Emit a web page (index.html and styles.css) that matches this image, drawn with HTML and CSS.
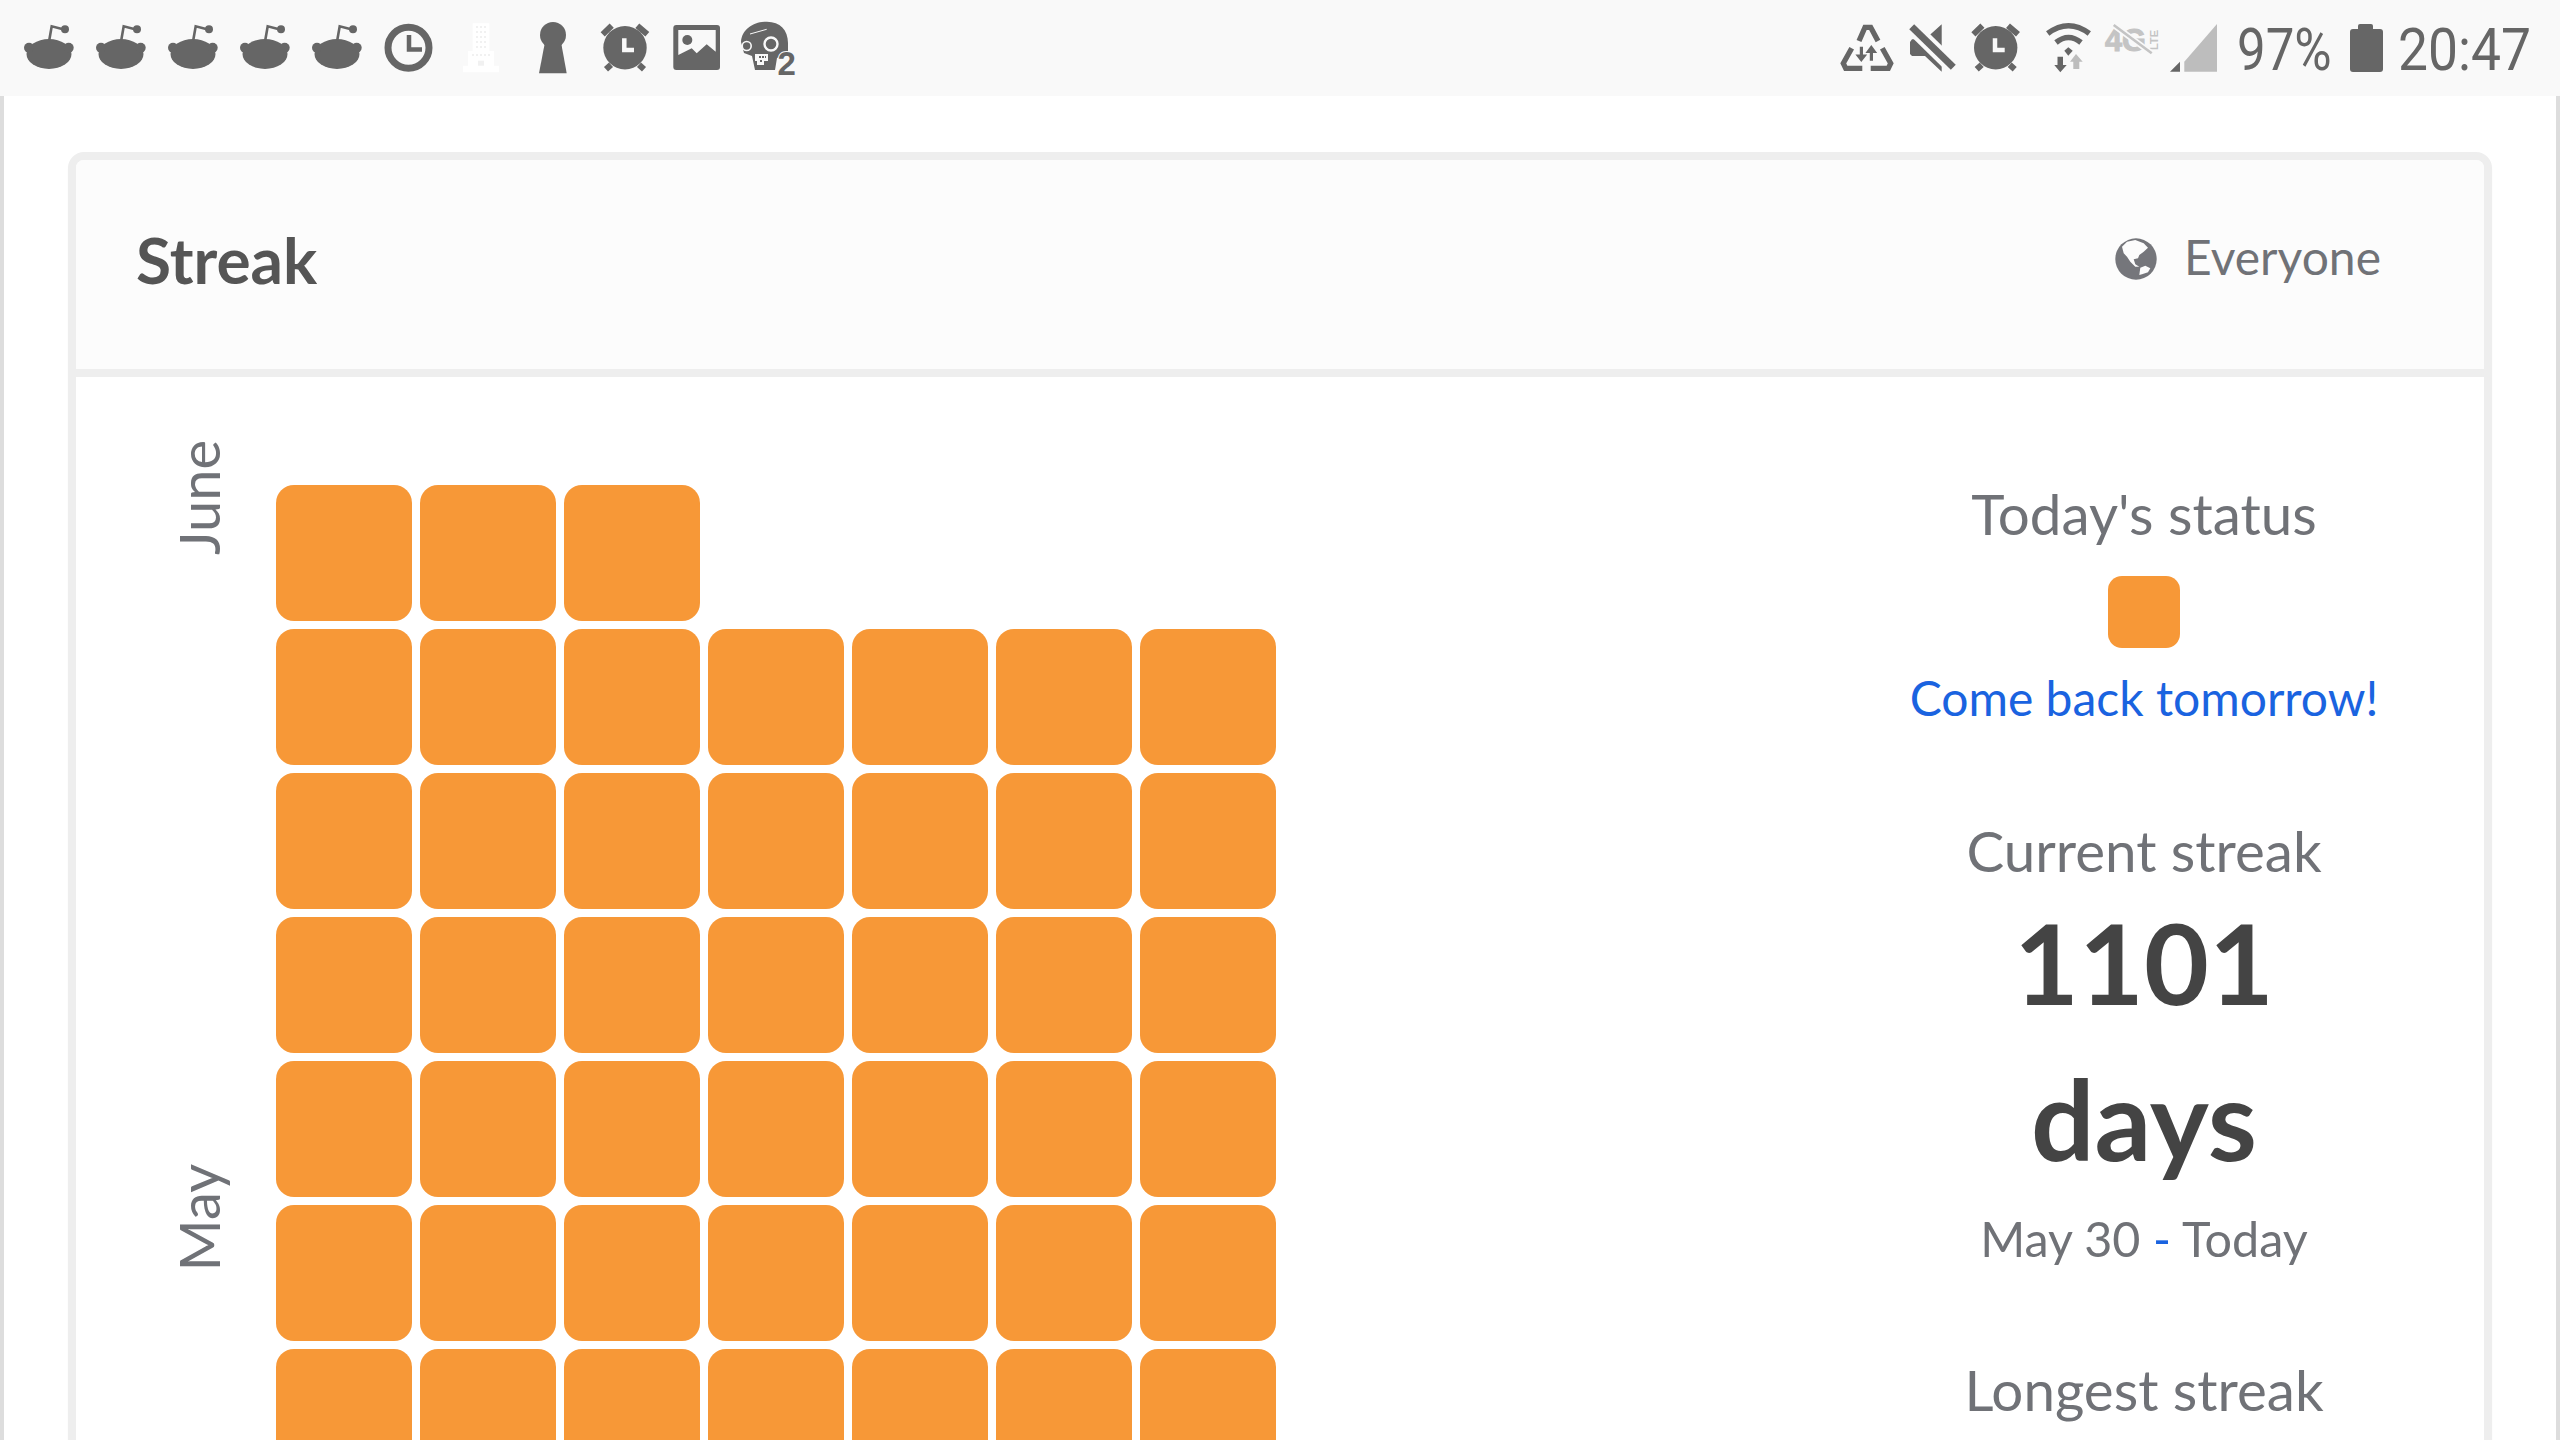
FILE: index.html
```html
<!DOCTYPE html>
<html lang="en">
<head>
    <meta charset="UTF-8">
    <title>Streak</title>
    <link rel="stylesheet" href="styles.css">
</head>
<body>
    <svg class="defs" width="0" height="0">
        <symbol id="reddit" viewBox="0 0 72 72">
            <ellipse cx="36" cy="42" rx="22.5" ry="15"/>
            <circle cx="16" cy="35.7" r="5"/>
            <circle cx="55.7" cy="35.7" r="5"/>
            <path d="M36.3 28 38.7 14.3 51 17.5" fill="none" stroke="#666" stroke-width="2.6"/>
            <circle cx="52" cy="17.3" r="4"/>
        </symbol>
        <symbol id="alarm" viewBox="0 0 72 72">
            <circle cx="36" cy="35.7" r="21.7"/>
            <path d="M13.7 22.3 22.7 13.7M58.3 22.3 48.3 13.7M17 57.3 22 52.7M55 57.3 50 52.7" fill="none" stroke="#666" stroke-width="6"/>
            <path d="M35.3 26.3V38H45" fill="none" stroke="#f9f9f9" stroke-width="4.5"/>
        </symbol>
    </svg>

    <!-- Android status bar -->
    <div class="statusbar">
        <div class="notify-icons">
            <svg class="sb-icon"><use href="#reddit"/></svg>
            <svg class="sb-icon"><use href="#reddit"/></svg>
            <svg class="sb-icon"><use href="#reddit"/></svg>
            <svg class="sb-icon"><use href="#reddit"/></svg>
            <svg class="sb-icon"><use href="#reddit"/></svg>
            <svg class="sb-icon" viewBox="0 0 72 72">
                <circle cx="35.5" cy="35.7" r="20.5" fill="none" stroke="#666" stroke-width="7"/>
                <path d="M36 23V37.5H49" fill="none" stroke="#666" stroke-width="4.5"/>
            </svg>
            <svg class="sb-icon" viewBox="0 0 72 72">
                <path d="M27.7 11.3H44.3V39H49V53.7H54V60.3H18V53.7H23V39H27.7Z" fill="#fff"/>
                <path d="M31 15H41M31 20H41M31 25H41M31 30H41M31 35H41M27 43H45" fill="none" stroke="#f1f1f1" stroke-width="2" stroke-dasharray="2 2"/>
                <rect x="33" y="48.7" width="6" height="5" fill="#f1f1f1"/>
            </svg>
            <svg class="sb-icon" viewBox="0 0 72 72">
                <circle cx="36" cy="23" r="13"/>
                <path d="M28 30H44L49.7 61.3H22Z"/>
            </svg>
            <svg class="sb-icon"><use href="#alarm"/></svg>
            <svg class="sb-icon" viewBox="0 0 72 72">
                <rect x="12.3" y="13" width="46.7" height="45" rx="3"/>
                <path d="M17.3 18H54.7V39.7L45.7 32.3 35.7 41.3 30.7 36.3 17.3 43Z" fill="#f9f9f9"/>
                <circle cx="26.3" cy="28" r="5"/>
            </svg>
            <svg class="sb-icon zombie" viewBox="0 0 72 72">
                <path d="M8 30C9 16 22 9.7 34 9.7 47 9.7 55 18 55 31V42L44 46 42 58H22L19 44 11 41Z"/>
                <circle cx="13.7" cy="34" r="4.5" fill="none" stroke="#f9f9f9" stroke-width="1.6"/>
                <circle cx="38" cy="32" r="6.5" fill="none" stroke="#f9f9f9" stroke-width="2.4"/>
                <path d="M17 22 33.7 17.3" fill="none" stroke="#f9f9f9" stroke-width="1"/>
                <path d="M22 42H35V49H31V53H24V49H22Z" fill="#f9f9f9"/>
                <path d="M26 45H33M27 49H30" fill="none" stroke="#666" stroke-width="2" stroke-dasharray="2 1"/>
                <text x="44.5" y="63" class="zombie-two">2</text>
            </svg>
        </div>
        <div class="system-icons">
            <svg class="sb-icon narrow recycle" viewBox="0 0 64 72">
                <path d="M25 29 31 15.3H36.7L44 29M17.7 36.3 9.3 51.3 11.7 56.3H28.3M36.7 56.3H54.3L56.7 51.3 48.3 36.3" fill="none" stroke="#666" stroke-width="5.3"/>
                <path d="M25.8 34.7H29V42.5H33.2L27.3 50 21.4 42.5H25.8ZM35.8 48.7H39V41H43.2L37.3 33 31.4 41H35.8Z"/>
            </svg>
            <svg class="sb-icon narrow" viewBox="0 0 64 72">
                <path d="M11 30 13 27.3H26L42.7 12.3V59.7L26 44H13L11 42Z"/>
                <path d="M12.7 14.7 54.3 55.3" fill="none" stroke="#f9f9f9" stroke-width="15"/>
                <path d="M12.7 14.7 54.3 55.3" fill="none" stroke="#666" stroke-width="7"/>
            </svg>
            <svg class="sb-icon narrow alarm-right" viewBox="3.3 0 64 72"><use href="#alarm" width="72" height="72"/></svg>
            <svg class="sb-icon" viewBox="0 0 72 72">
                <path d="M15.7 21.5Q36.5 6 57.3 21.5M24 30.5Q36.5 20.5 49 30.5" fill="none" stroke="#666" stroke-width="5.5"/>
                <path d="M32.3 38.7 36.3 35.3 40.7 38.7 36.3 43.7Z"/>
                <path d="M25.5 44.7H31V53H34.7L28.3 60.3 22.3 53H25.5Z"/>
                <path d="M41.3 57H47.3V49.7H50.7L44 42 38 49.7H41.3Z" fill="#bdbdbd"/>
            </svg>
            <svg class="sb-icon fourg" viewBox="0 0 55 72">
                <text x="1" y="38.7" class="fourg-main" textLength="41" lengthAdjust="spacingAndGlyphs">4G</text>
                <text transform="translate(54.3 38) rotate(-90)" class="fourg-lte" textLength="20" lengthAdjust="spacingAndGlyphs">LTE</text>
                <path d="M9.7 13 47.7 41.3" fill="none" stroke="#f9f9f9" stroke-width="6"/>
                <path d="M9.7 13 47.7 41.3" fill="none" stroke="#c4c4c4" stroke-width="2.6"/>
            </svg>
            <svg class="sb-icon narrow" viewBox="0 0 64 72">
                <path d="M25.3 49.7 58 12V59.7H25.3Z" fill="#bdbdbd"/>
                <path d="M11 59.7 21 49.7V59.7Z"/>
            </svg>
            <span class="sb-text battery-text">97%</span>
            <div class="battery"></div>
            <span class="sb-text clock-text">20:47</span>
        </div>
    </div>

    <div class="page">
        <div class="card">
            <div class="card-header">
                <h1 class="card-title">Streak</h1>
                <div class="visibility">
                    <svg class="globe" viewBox="0 0 42 42">
                        <circle cx="21" cy="21" r="20.7" fill="#75767b"/>
                        <path d="M7 8.7 12 3.7 20.3 2 28.7 5.3 33 9.7 28.7 13.7 24.3 17 23 20.3 18.7 21.3 20.3 26.3 24.3 28.7H20.3L15.3 23.7 12 18.7 8.7 15.3Z" fill="#fcfcfc"/>
                        <path d="M25.3 29.7 30.3 27.7 35.3 30.3 33 34.3 27 36.3 24.3 37Z" fill="#fcfcfc"/>
                    </svg>
                    <span>Everyone</span>
                </div>
            </div>

            <div class="card-body">
                <div class="months">
                    <div class="month month-june">June</div>
                    <div class="month month-may">May</div>
                </div>

                <div class="calendar">
                    <div class="day"></div><div class="day"></div><div class="day"></div><div class="day empty"></div><div class="day empty"></div><div class="day empty"></div><div class="day empty"></div>
                    <div class="day"></div><div class="day"></div><div class="day"></div><div class="day"></div><div class="day"></div><div class="day"></div><div class="day"></div>
                    <div class="day"></div><div class="day"></div><div class="day"></div><div class="day"></div><div class="day"></div><div class="day"></div><div class="day"></div>
                    <div class="day"></div><div class="day"></div><div class="day"></div><div class="day"></div><div class="day"></div><div class="day"></div><div class="day"></div>
                    <div class="day"></div><div class="day"></div><div class="day"></div><div class="day"></div><div class="day"></div><div class="day"></div><div class="day"></div>
                    <div class="day"></div><div class="day"></div><div class="day"></div><div class="day"></div><div class="day"></div><div class="day"></div><div class="day"></div>
                    <div class="day"></div><div class="day"></div><div class="day"></div><div class="day"></div><div class="day"></div><div class="day"></div><div class="day"></div>
                </div>

                <div class="stats">
                    <div class="stat-label">Today's status</div>
                    <div class="day today"></div>
                    <a class="stat-link" href="#">Come back tomorrow!</a>

                    <div class="stat-label current">Current streak</div>
                    <div class="stat-value">1101<br>days</div>
                    <div class="stat-range">May 30 <span class="dash">-</span> Today</div>

                    <div class="stat-label longest">Longest streak</div>
                </div>
            </div>
        </div>
    </div>
</body>
</html>
```

FILE: styles.css
```css
html, body {
    margin: 0;
    height: 1440px;
    overflow: hidden;
}
body {
    font-family: Lato, "Open Sans", sans-serif;
    background: #fff;
    color: #707277;
}
.defs {
    position: absolute;
}

/* status bar */
.statusbar {
    display: flex;
    justify-content: space-between;
    align-items: center;
    height: 96px;
    background: #f9f9f9;
    padding: 0 30px 0 13px;
    box-sizing: border-box;
}
.notify-icons, .system-icons {
    display: flex;
    align-items: center;
}
.sb-icon {
    width: 72px;
    height: 72px;
    fill: #666;
    flex: none;
}
.sb-icon.narrow {
    width: 64px;
}
.sb-icon.recycle {
    margin-right: 1px;
}
.sb-icon.alarm-right {
    margin-right: 5px;
}
.sb-icon.fourg {
    width: 55px;
}
.zombie-two {
    font-family: "Liberation Sans", sans-serif;
    font-weight: 700;
    font-size: 33px;
    stroke: #f9f9f9;
    stroke-width: 2px;
    paint-order: stroke;
}
.fourg-main {
    font-family: "Liberation Sans", sans-serif;
    font-weight: 700;
    font-size: 31px;
    fill: #c4c4c4;
    stroke: #c4c4c4;
    stroke-width: 1px;
}
.fourg-lte {
    font-family: "Liberation Sans", sans-serif;
    font-weight: 700;
    font-size: 10px;
    fill: #c4c4c4;
}
.sb-text {
    font-family: Roboto, sans-serif;
    font-size: 60px;
    color: #666;
    display: inline-block;
    transform-origin: left center;
    white-space: nowrap;
    margin-top: 3px;
}
.battery-text {
    width: 113px;
    transform: scaleX(0.85);
    margin-left: 14px;
}
.clock-text {
    width: 132px;
    transform: scaleX(0.89);
    margin-left: 15px;
}
.battery {
    position: relative;
    width: 33px;
    height: 43px;
    background: #666;
    border-radius: 3px;
    margin-top: 5px;
}
.battery::before {
    content: "";
    position: absolute;
    left: 8px;
    top: -5px;
    width: 15px;
    height: 6px;
    background: #666;
    border-radius: 2px 2px 0 0;
}

/* page + card */
.page {
    border-left: 4px solid #ddd;
    border-right: 4px solid #ddd;
    padding: 56px 64px 0;
    height: 1344px;
    box-sizing: border-box;
}
.card {
    border: 8px solid #eee;
    border-radius: 16px;
    box-shadow: 0 2px 2px rgba(0, 0, 0, 0.03);
}
.card-header {
    display: flex;
    justify-content: space-between;
    align-items: center;
    height: 217px;
    padding: 0 103px 10px 60px;
    box-sizing: border-box;
    background: #fcfcfc;
    border-bottom: 8px solid #eee;
    border-radius: 8px 8px 0 0;
}
.card-title {
    margin: 0;
    font-size: 64px;
    font-weight: 700;
    color: #555;
}
.visibility {
    display: flex;
    align-items: center;
    gap: 27px;
    font-size: 48px;
    margin-bottom: 6px;
}
.globe {
    width: 42px;
    height: 42px;
    margin-top: 4px;
}

.card-body {
    display: flex;
    padding: 108px 76px 0 95px;
}
.months {
    width: 105px;
    flex: none;
}
.month {
    writing-mode: vertical-rl;
    transform: rotate(180deg);
    font-size: 56px;
    line-height: 56px;
    width: 56px;
}
.month-june {
    margin-top: -45px;
}
.month-may {
    margin-top: 609px;
}
.calendar {
    display: grid;
    grid-template-columns: repeat(7, 136px);
    grid-auto-rows: 136px;
    gap: 8px;
}
.day {
    background: #f79837;
    border-radius: 18px;
}
.day.empty {
    background: none;
}

.stats {
    margin-left: auto;
    margin-top: -6px;
    width: 528px;
    text-align: center;
}
.stat-label {
    font-size: 56.5px;
    line-height: 68px;
}
.today {
    width: 72px;
    height: 72px;
    border-radius: 14px;
    margin: 29px auto 20px;
}
.stat-link {
    display: block;
    font-size: 48px;
    line-height: 60px;
    color: #1a63e0;
    text-decoration: none;
}
.current {
    margin-top: 88px;
}
.stat-value {
    font-size: 112px;
    font-weight: 700;
    line-height: 156px;
    color: #444;
}
.stat-range {
    font-size: 48.5px;
    line-height: 60px;
    margin-top: 12px;
}
.dash {
    color: #1a63e0;
}
.longest {
    margin-top: 87px;
}
```
